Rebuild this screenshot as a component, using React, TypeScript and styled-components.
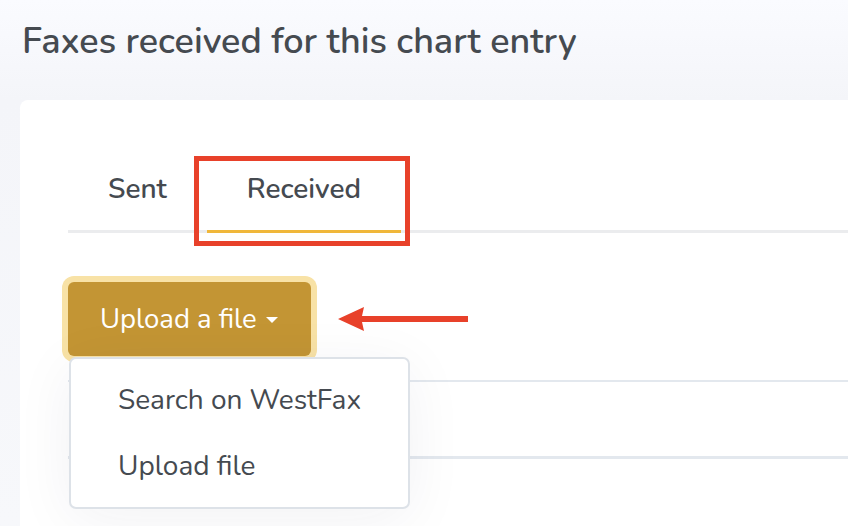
import React from 'react'
import styled, { createGlobalStyle } from 'styled-components'

const GlobalStyle = createGlobalStyle`
    html, body {
        margin: 0;
        padding: 0;
    }
    body {
        background: linear-gradient(180deg, #fafbff 0%, #f4f5f9 100px, #f7f8fb 100%);
        font-family: Nunito, Lato, "Noto Sans", sans-serif;
        color: #454a50;
        overflow: hidden;
    }
`

const Page = styled.div`
    padding: 20px 0 0 20px;
    height: 526px;
    box-sizing: border-box;
    overflow: hidden;
`

const Title = styled.h1`
    margin: 0 0 0 2px;
    font-size: 36px;
    line-height: 44px;
    font-weight: 600;
    color: #454a50;
`

const Card = styled.div`
    margin-top: 36px;
    background: #fff;
    border-radius: 8px 0 0 0;
    padding: 53px 0 0 48px;
    height: 420px;
`

const TabBar = styled.div`
    display: flex;
    border-bottom: 3px solid #ebecee;
`

interface TabProps {
    $active?: boolean
}

const Tab = styled.div<TabProps>`
    position: relative;
    padding: 18px 40px 23px;
    font-size: 28px;
    line-height: 36px;
    font-weight: 600;
    color: #454a50;
    border-bottom: 3px solid ${props => props.$active ? '#f0b73a' : 'transparent'};
    margin-bottom: -3px;
`

const Highlight = styled.span`
    position: absolute;
    left: -13px;
    right: -9px;
    top: 3px;
    bottom: -16px;
    border: 5px solid #e8412a;
`

const Actions = styled.div`
    position: relative;
    margin-top: 49px;
    display: flex;
    align-items: center;
`

const UploadButton = styled.button`
    display: flex;
    align-items: center;
    gap: 9px;
    height: 74px;
    padding: 0 33px 0 32px;
    border: none;
    border-radius: 6px;
    background: #c39534;
    box-shadow: 0 0 0 6px #f8e2a6;
    color: #fff;
    font-family: inherit;
    font-size: 27.5px;
    font-weight: 400;
`

const Caret = styled.span`
    width: 0;
    height: 0;
    border-left: 6px solid transparent;
    border-right: 6px solid transparent;
    border-top: 6px solid #fff;
    margin-top: 2px;
`

const Arrow = styled.svg`
    margin-left: 27px;
`

const Table = styled.div`
    margin-top: 24px;
`

const TableRow = styled.div<{ $height: number; $border: number }>`
    height: ${props => props.$height}px;
    border-bottom: ${props => props.$border}px solid #e3e8ee;
`

const Menu = styled.div`
    position: absolute;
    top: 75px;
    left: 1px;
    width: 341px;
    box-sizing: border-box;
    padding: 8px 0;
    background: #fff;
    border: 2px solid #dde2e8;
    border-radius: 7px;
    box-shadow: 0 10px 60px rgba(30, 40, 60, 0.06);
`

const MenuItem = styled.div`
    height: 66px;
    display: flex;
    align-items: center;
    padding-left: 47px;
    font-size: 28px;
    color: #454a50;
`

export default function App() {
    return (
        <>
            <GlobalStyle />
            <Page>
                <Title>Faxes received for this chart entry</Title>
                <Card>
                    <TabBar>
                        <Tab>Sent</Tab>
                        <Tab $active>
                            Received
                            <Highlight />
                        </Tab>
                    </TabBar>
                    <Actions>
                        <UploadButton>
                            Upload a file
                            <Caret />
                        </UploadButton>
                        <Arrow width="132" height="28" viewBox="0 0 132 28">
                            <path d="M0 14 L26 2 L24 11 L130 11 L130 17 L24 17 L26 26 Z" fill="#e8412a" />
                        </Arrow>
                        <Menu>
                            <MenuItem>Search on WestFax</MenuItem>
                            <MenuItem>Upload file</MenuItem>
                        </Menu>
                    </Actions>
                    <Table>
                        <TableRow $height={0} $border={2} />
                        <TableRow $height={74} $border={3} />
                    </Table>
                </Card>
            </Page>
        </>
    )
}
